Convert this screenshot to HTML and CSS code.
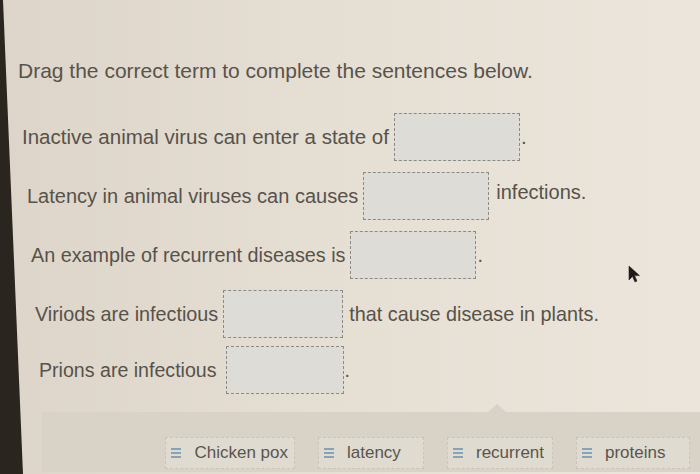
FILE: index.html
```html
<!DOCTYPE html>
<html lang="en">
<head>
  <meta charset="UTF-8" />
  <meta name="viewport" content="width=device-width, initial-scale=1.0" />
  <title>Drag the correct term</title>
  <link rel="stylesheet" href="styles.css">
</head>
<body>
  <div class="sheet">
    <h1 class="prompt">Drag the correct term to complete the sentences below.</h1>

    <div class="sentences">
      <div class="row row-1">
        <span>Inactive animal virus can enter a state of</span>
        <span class="blank"></span>
        <span class="tail">.</span>
      </div>
      <div class="row row-2">
        <span>Latency in animal viruses can causes</span>
        <span class="blank"></span>
        <span class="tail raised">infections.</span>
      </div>
      <div class="row row-3">
        <span>An example of recurrent diseases is</span>
        <span class="blank"></span>
        <span class="tail">.</span>
      </div>
      <div class="row row-4">
        <span>Viriods are infectious</span>
        <span class="blank narrow"></span>
        <span class="tail spaced">that cause disease in plants.</span>
      </div>
      <div class="row row-5">
        <span>Prions are infectious</span>
        <span class="blank wide-gap"></span>
        <span class="tail">.</span>
      </div>
    </div>

    <div class="tray">
      <div class="chip"><span class="grip"></span>Chicken pox</div>
      <div class="chip"><span class="grip"></span>latency</div>
      <div class="chip"><span class="grip"></span>recurrent</div>
      <div class="chip chip-wide"><span class="grip"></span>proteins</div>
    </div>

    <svg class="cursor" width="14" height="18" viewBox="0 0 14 18">
      <path d="M1 1 L1 15 L4.5 11.5 L7 17 L9 16 L6.6 10.6 L11.5 10.6 Z" fill="#1e1b18" stroke="#2a2622" stroke-width="0.6"/>
    </svg>
  </div>
</body>
</html>
```

FILE: styles.css
```css
body {
  margin: 0;
  padding: 0;
  background: #2b2520;
  font-family: 'Liberation Sans', Arial, sans-serif;
  color: #57524b;
}

.sheet {
  position: relative;
  height: 474px;
  overflow: hidden;
  background: linear-gradient(to right, #ddd5c9, #e6dfd4 50%, #ebe5db);
  clip-path: polygon(3px 0, 100% 0, 100% 100%, 23px 100%);
  display: flex;
  flex-direction: column;
}

.prompt {
  margin: 58px 0 0 18px;
  font-size: 21px;
  font-weight: 400;
  line-height: 26px;
  color: #58534c;
}

.sentences {
  margin-top: 29px;
  display: flex;
  flex-direction: column;
  gap: 11px;
  font-size: 20px;
}

.row {
  display: flex;
  align-items: center;
  height: 48px;
}

.row-1 { padding-left: 22px; font-size: 20.5px; }
.row-2 { padding-left: 27px; }
.row-3 { padding-left: 31px; font-size: 19.8px; }
.row-4 { padding-left: 35px; font-size: 19.8px; }
.row-5 { padding-left: 39px; font-size: 19.6px; margin-top: -3px; }

.blank {
  width: 124px;
  height: 46px;
  margin: 0 1px 0 5px;
  border: 1px dashed #8c8a86;
  background: #dedcd6;
}

.narrow {
  width: 118px;
}

.wide-gap {
  margin-left: 9px;
  width: 116px;
}

.raised {
  margin-top: -8px;
  padding-left: 6px;
}

.spaced {
  padding-left: 5px;
}

.tray {
  margin: auto 0 2px 42px;
  height: 60px;
  position: relative;
  background: #d8d2c7;
  display: flex;
  align-items: flex-end;
  justify-content: flex-end;
  gap: 23px;
  padding: 0 10px 3px 0;
  box-sizing: border-box;
}

.tray::before {
  content: "";
  position: absolute;
  left: 446px;
  top: -8px;
  border-left: 9px solid transparent;
  border-right: 9px solid transparent;
  border-bottom: 8px solid #d8d2c7;
}

.chip {
  min-width: 106px;
  height: 32px;
  display: flex;
  align-items: center;
  gap: 13px;
  padding: 0 6px 0 5px;
  border: 1px dashed #c9c4ba;
  background: #e0dbd1;
  font-size: 17px;
  color: #5a554e;
  box-sizing: border-box;
}

.chip-wide {
  min-width: 114px;
}

.grip {
  width: 10px;
  height: 10px;
  border-top: 2px solid #87a3b7;
  border-bottom: 2px solid #87a3b7;
  box-sizing: border-box;
  position: relative;
}

.grip::after {
  content: "";
  position: absolute;
  left: 0;
  right: 0;
  top: 2px;
  height: 2px;
  background: #87a3b7;
}

.cursor {
  position: absolute;
  left: 628px;
  top: 265px;
}
```
